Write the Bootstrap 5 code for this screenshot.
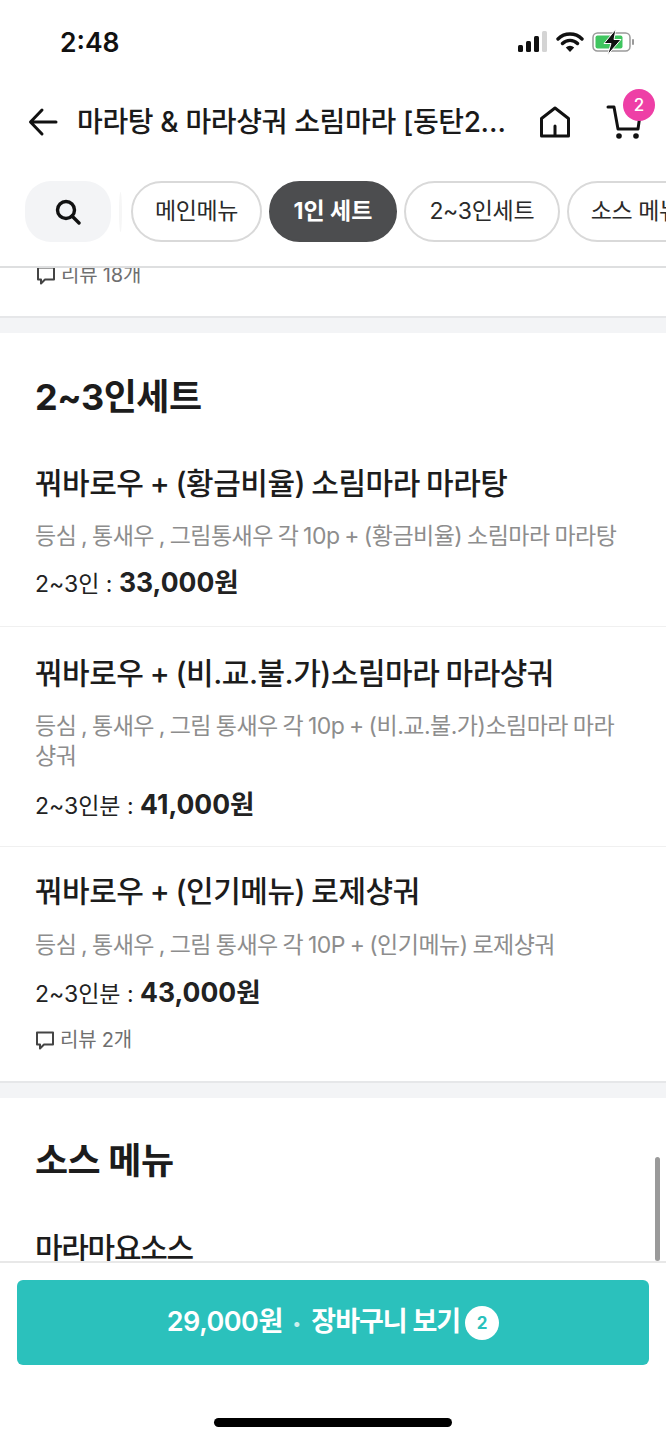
<!DOCTYPE html>
<html lang="ko">
<head>
    <meta charset="UTF-8">
    <meta name="viewport" content="width=device-width, initial-scale=1.0">
    <title>메뉴</title>
    <link href="https://cdn.jsdelivr.net/npm/bootstrap@5.3.0/dist/css/bootstrap.min.css" rel="stylesheet">
    <style>
        html, body { height: 1440px; overflow: hidden; }
        body { font-family: "Inter", "Noto Sans CJK KR", sans-serif; color: #1c1c1c; background: #fff; }
        .screen { width: 666px; height: 1440px; position: relative; overflow: hidden; }
        .status-row { height: 80px; padding: 13px 30px 0 60px; }
        .clock { font-size: 26.5px; font-weight: 600; line-height: 58px; color: #111; }
        .status-icons { margin-top: 16px; }
        .app-bar { height: 84px; padding: 0 20px 0 28px; }
        .app-title { flex: none; font-size: 28px; font-weight: 500; line-height: 38px; letter-spacing: -.35px; margin-left: 19px; width: 430px; white-space: nowrap; overflow: hidden; color: #1a1a1a; }
        .home-icon { margin-left: 32px; }
        .cart-wrap { position: relative; width: 36px; height: 36px; margin-left: 35px; }
        .cart-count { position: absolute; top: -15px; left: 17px; width: 32px; height: 32px; border-radius: 50%; background: #ee3fa6; color: #fff; font-size: 17px; font-weight: 500; line-height: 32px; text-align: center; }
        .chip-row { height: 104px; padding: 17px 0 0 25px; gap: 7px; border-bottom: 2px solid #dedfe0; overflow: hidden; white-space: nowrap; }
        .search-chip { flex: none; width: 86px; height: 61px; border-radius: 26px; background: #f3f4f6; }
        .chip-sep { flex: none; width: 3px; height: 40px; margin: 11px 2px 0 1px; background: #f6f6f6; border-radius: 50%; }
        .menu-chip { flex: none; height: 61px; border-radius: 31px; border: 2px solid #d9d9d9; font-size: 23px; letter-spacing: -.4px; line-height: 57px; padding: 0 22px; color: #2a2a2a; background: #fff; }
        .menu-chip.is-on { background: #4c4d4f; border-color: #4c4d4f; color: #fff; font-weight: 700; letter-spacing: 0; padding: 0 22.5px; }
        .menu-chip.is-wide { padding: 0 23.5px; letter-spacing: -.3px; }
        .scroll-area { height: 993px; overflow: hidden; }
        .review-line { font-size: 20px; color: #6f6f6f; line-height: 28px; letter-spacing: -.2px; gap: 5px; }
        .tail-block { height: 55px; padding: 0 36px; margin-top: -7px; }
        .band { height: 17px; background: #f3f4f6; border-top: 2px solid #e6e7e9; }
        .sec-head { font-size: 36px; font-weight: 700; letter-spacing: -.5px; line-height: 46px; margin: 0; padding: 41px 35px 0; color: #1c1c1c; }
        .sec-head.is-last { padding-top: 40px; }
        .food-row { padding: 24px 35px 24px; border-bottom: 1px solid #f0f0f0; }
        .food-row:nth-child(1) { padding-top: 43px; }
        .food-row:nth-child(2) { padding-top: 26px; padding-bottom: 22px; }
        .food-row:nth-child(2) .food-desc { margin-bottom: 15px; }
        .food-row:last-child { border-bottom: 0; padding-bottom: 27px; }
        .food-row:last-child .food-name { margin-bottom: 19px; }
        .food-row:last-child .food-desc { margin-bottom: 14px; }
        .food-name { font-size: 30px; font-weight: 500; line-height: 40px; letter-spacing: -.5px; word-spacing: -1.2px; margin: 0 0 18px; color: #1c1c1c; }
        .food-desc { font-size: 23px; line-height: 30px; letter-spacing: -.5px; word-spacing: -1.2px; color: #8d8d8d; margin: 0 10px 13px 0; }
        .food-price { font-size: 23px; line-height: 36px; color: #222; margin: 0 0 14px; }
        .food-row .food-price:last-child { margin-bottom: 0; }
        .food-price b { font-size: 26.5px; font-weight: 700; }
        .sauce-name { padding: 44px 35px 0; }
        .sauce-name .food-name { letter-spacing: -1.3px; }
        .bottom-bar { height: 179px; border-top: 2px solid #e8e8e8; padding: 17px 17px 0; background: #fff; }
        .cart-btn { height: 85px; border-radius: 6px; background: #2bc1bc; color: #fff; font-size: 27px; font-weight: 600; letter-spacing: -.5px; }
        .cart-btn-label { letter-spacing: -1px; }
        .dot-sep { font-size: 16px; opacity: .75; margin: 0 11px 0 10px; }
        .cart-btn-count { width: 34px; height: 34px; border-radius: 50%; background: #fff; color: #2bc1bc; font-size: 17px; font-weight: 700; line-height: 34px; text-align: center; margin-left: 5px; letter-spacing: 0; }
        .home-pill { width: 238px; height: 9px; border-radius: 5px; background: #000; margin: 53px auto 0; }
        .scroll-thumb { position: absolute; left: 655px; top: 1157px; width: 5px; height: 104px; border-radius: 3px; background: #9a9a9a; }
    </style>
</head>
<body>
<div class="screen d-flex flex-column">
    <div class="status-row d-flex justify-content-between align-items-start">
        <span class="clock">2:48</span>
        <div class="status-icons d-flex align-items-center gap-2">
            <svg width="30" height="22" viewBox="0 0 30 22"><rect x="0" y="14" width="5" height="7" rx="1.5" fill="#111"/><rect x="8" y="10" width="5" height="11" rx="1.5" fill="#111"/><rect x="16" y="5" width="5" height="16" rx="1.5" fill="#111"/><rect x="24" y="0" width="5" height="21" rx="1.5" fill="#d4d4d4"/></svg>
            <svg width="28" height="22" viewBox="0 0 28 22"><path d="M2 8a17 17 0 0 1 24 0M6.5 12.5a10.5 10.5 0 0 1 15 0" fill="none" stroke="#111" stroke-width="3.4" stroke-linecap="round"/><path d="M14 21l-4.2-4.6a6 6 0 0 1 8.4 0z" fill="#111"/></svg>
            <svg width="44" height="26" viewBox="0 0 44 26"><rect x="1" y="4" width="37" height="18" rx="4.5" fill="#fff" stroke="#9a9a9a" stroke-width="1.5"/><rect x="3.5" y="6.5" width="27" height="13" rx="2" fill="#3fc55f"/><rect x="40" y="10" width="2" height="6" rx="1" fill="#9a9a9a"/><path d="M24 0L12 14.5h7L15.5 26 29 10.5h-7z" fill="#111" stroke="#fff" stroke-width="1"/></svg>
        </div>
    </div>
    <div class="app-bar d-flex align-items-center">
        <svg class="flex-shrink-0" width="30" height="30" viewBox="0 0 30 30"><path d="M28 15H3M14 3L2.5 15 14 27" fill="none" stroke="#111" stroke-width="3" stroke-linecap="round" stroke-linejoin="round"/></svg>
        <div class="app-title">마라탕 &amp; 마라샹궈 소림마라 [동탄2…</div>
        <svg class="home-icon flex-shrink-0" width="32" height="32" viewBox="0 0 32 32"><path d="M2.5 30V12.5L16 2l13.5 10.5V30zM16 30V20" fill="none" stroke="#111" stroke-width="3" stroke-linejoin="round" stroke-linecap="round"/></svg>
        <div class="cart-wrap flex-shrink-0">
            <svg width="36" height="36" viewBox="0 0 36 36"><path d="M2 3h6l4 22h20l2-14" fill="none" stroke="#111" stroke-width="3" stroke-linecap="round" stroke-linejoin="round"/><circle cx="13" cy="32" r="2.8" fill="#111"/><circle cx="30" cy="32" r="2.8" fill="#111"/></svg>
            <span class="cart-count">2</span>
        </div>
    </div>
    <div class="chip-row d-flex align-items-start">
        <div class="search-chip d-flex align-items-center justify-content-center">
            <svg width="26" height="26" viewBox="0 0 26 26"><circle cx="11" cy="11" r="8.5" fill="none" stroke="#111" stroke-width="3.4"/><path d="M17 17l7 7" stroke="#111" stroke-width="3.4" stroke-linecap="round"/></svg>
        </div>
        <div class="chip-sep"></div>
        <div class="menu-chip">메인메뉴</div>
        <div class="menu-chip is-on">1인 세트</div>
        <div class="menu-chip is-wide">2~3인세트</div>
        <div class="menu-chip">소스 메뉴</div>
    </div>
    <div class="scroll-area">
        <div class="tail-block">
            <div class="review-line d-flex align-items-center">
                <svg width="20" height="20" viewBox="0 0 20 20"><path d="M2 2.5h16v12H9l-4 4v-4H2z" fill="none" stroke="#444" stroke-width="2" stroke-linejoin="round"/></svg>
                리뷰 18개
            </div>
        </div>
        <div class="band"></div>
        <h2 class="sec-head">2~3인세트</h2>
        <div id="setList"></div>
        <div class="band"></div>
        <h2 class="sec-head is-last">소스 메뉴</h2>
        <div class="sauce-name"><h3 class="food-name">마라마요소스</h3></div>
    </div>
    <div class="bottom-bar">
        <div class="cart-btn d-flex align-items-center justify-content-center">
            <span>29,000원</span><span class="dot-sep">•</span><span class="cart-btn-label">장바구니 보기</span><span class="cart-btn-count">2</span>
        </div>
        <div class="home-pill"></div>
    </div>
    <div class="scroll-thumb"></div>
</div>
<script src="https://cdn.jsdelivr.net/npm/bootstrap@5.3.0/dist/js/bootstrap.bundle.min.js"></script>
<script>
    const sets = [
        { name: '꿔바로우 + (황금비율) 소림마라 마라탕', desc: '등심 , 통새우 , 그림통새우 각 10p + (황금비율) 소림마라 마라탕', size: '2~3인 : ', price: '33,000원' },
        { name: '꿔바로우 + (비.교.불.가)소림마라 마라샹궈', desc: '등심 , 통새우 , 그림 통새우 각 10p + (비.교.불.가)소림마라 마라샹궈', size: '2~3인분 : ', price: '41,000원' },
        { name: '꿔바로우 + (인기메뉴) 로제샹궈', desc: '등심 , 통새우 , 그림 통새우 각 10P + (인기메뉴) 로제샹궈', size: '2~3인분 : ', price: '43,000원', reviews: 2 }
    ];
    const reviewIcon = '<svg width="20" height="20" viewBox="0 0 20 20"><path d="M2 2.5h16v12H9l-4 4v-4H2z" fill="none" stroke="#444" stroke-width="2" stroke-linejoin="round"/></svg>';
    document.getElementById('setList').innerHTML = sets.map(s => `
        <div class="food-row">
            <h3 class="food-name">${s.name}</h3>
            <p class="food-desc">${s.desc}</p>
            <p class="food-price">${s.size}<b>${s.price}</b></p>
            ${s.reviews ? `<div class="review-line d-flex align-items-center">${reviewIcon}리뷰 ${s.reviews}개</div>` : ''}
        </div>`).join('');
</script>
</body>
</html>
